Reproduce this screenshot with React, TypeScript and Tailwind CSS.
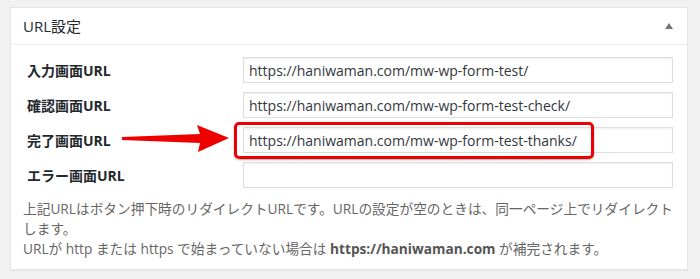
import React from "react";

const font = { fontFamily: '"Open Sans", "Noto Sans CJK JP", sans-serif' };

const rows = [
  { label: "入力画面URL", value: "https://haniwaman.com/mw-wp-form-test/" },
  { label: "確認画面URL", value: "https://haniwaman.com/mw-wp-form-test-check/" },
  { label: "完了画面URL", value: "https://haniwaman.com/mw-wp-form-test-thanks/" },
  { label: "エラー画面URL", value: "" },
];

export default function App() {
  return (
    <div className="relative w-[700px] h-[279px] bg-[#f1f1f1] overflow-hidden pt-[7px] pl-[10px]" style={font}>
      <div className="w-[678px] h-[263px] bg-white border border-[#e5e5e5] shadow-[0_1px_1px_rgba(0,0,0,0.04)]">
        <div className="h-[37px] border-b border-[#eeeeee] flex items-center justify-between pl-[12px] pr-[14px]">
          <span className="text-[15px] text-[#23282d]">URL設定</span>
          <span className="w-0 h-0 border-l-[4px] border-r-[4px] border-b-[6px] border-l-transparent border-r-transparent border-b-[#72777c]" />
        </div>
        <div className="pt-[12px] pl-[12px] pr-[5px]">
          <div className="flex flex-col">
            {rows.map((r) => (
              <div key={r.label} className="flex items-center h-[35px]">
                <div className="w-[220px] pl-[4px] text-[14px] font-bold text-[#23282d] -mt-[8px]">{r.label}</div>
                <div className="w-[430px] h-[26px] border border-[#dddddd] shadow-[inset_0_1px_2px_rgba(0,0,0,0.07)] flex items-center px-[5px] text-[14px] text-[#32373c] whitespace-nowrap -mt-[9px]">
                  {r.value}
                </div>
              </div>
            ))}
          </div>
          <div className="text-[13.7px] leading-[20px] text-[#666666] mt-[2px]">
            <div className="whitespace-nowrap">上記URLはボタン押下時のリダイレクトURLです。URLの設定が空のときは、同一ページ上でリダイレクト</div>
            <div className="whitespace-nowrap">します。</div>
            <div className="whitespace-nowrap">
              URLが http または https で始まっていない場合は <b className="font-bold text-[#555555]">https://haniwaman.com</b> が補完されます。
            </div>
          </div>
        </div>
      </div>
      <div className="absolute left-[234px] top-[122px] w-[360px] h-[37px] border-[3px] border-[#ee0000] rounded-[5px] shadow-[0_1px_2px_rgba(0,0,0,0.3)]" />
      <svg className="absolute left-0 top-0" width="700" height="279">
        <path d="M122 137 L200 134 L197 125 L229 138 L198 152 L200 143 L122 140 Z" fill="#ee0000" />
      </svg>
    </div>
  );
}
